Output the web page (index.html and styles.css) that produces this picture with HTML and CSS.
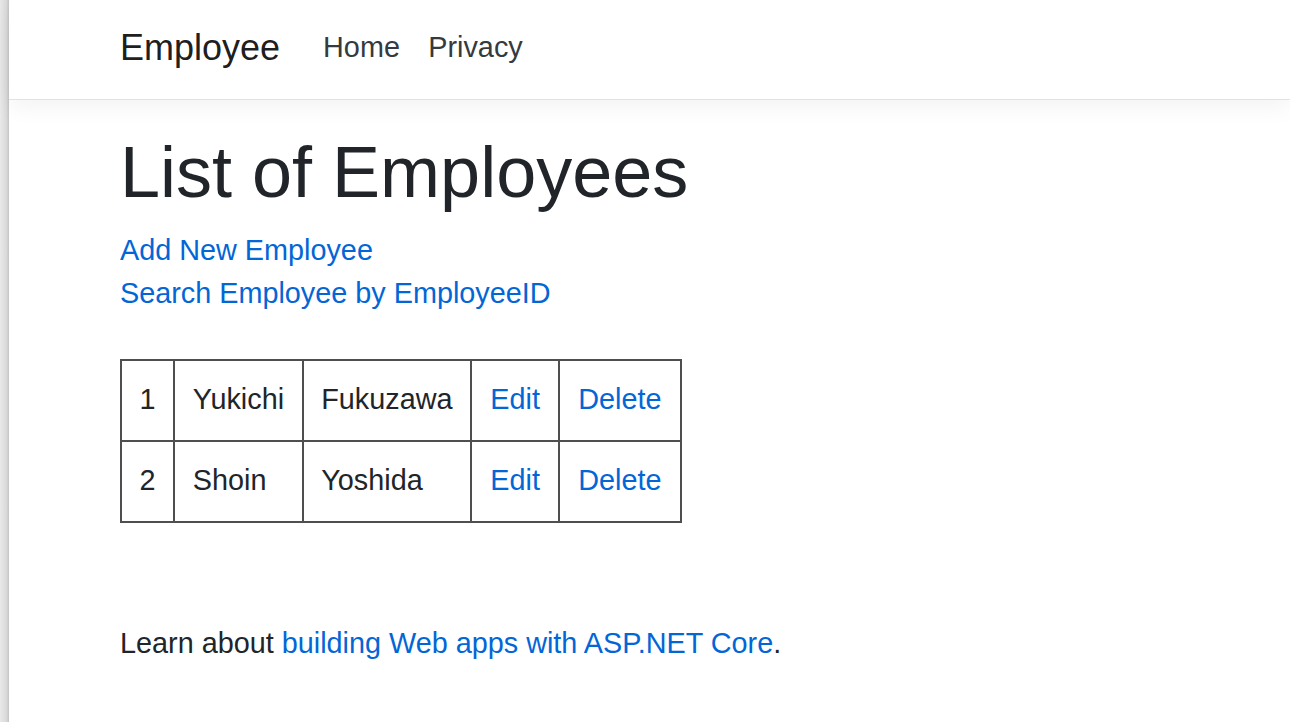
FILE: index.html
```html
<!DOCTYPE html>
<html lang="en">
<head>
<meta charset="utf-8">
<title>List of Employees</title>
<link rel="stylesheet" href="styles.css">
</head>
<body>
<div class="strip"></div>
<div class="page">
  <header class="navbar">
    <a class="brand" href="#">Employee</a>
    <nav class="nav">
      <a class="nav-link" href="#">Home</a>
      <a class="nav-link" href="#">Privacy</a>
    </nav>
  </header>
  <main class="main">
    <h1 class="title">List of Employees</h1>
    <div class="actions">
      <a class="link" href="#">Add New Employee</a>
      <a class="link" href="#">Search Employee by EmployeeID</a>
    </div>
    <table class="emp-table">
      <tbody>
        <tr>
          <td>1</td>
          <td>Yukichi</td>
          <td>Fukuzawa</td>
          <td class="act"><a class="link" href="#">Edit</a></td>
          <td class="act"><a class="link" href="#">Delete</a></td>
        </tr>
        <tr>
          <td>2</td>
          <td>Shoin</td>
          <td>Yoshida</td>
          <td class="act"><a class="link" href="#">Edit</a></td>
          <td class="act"><a class="link" href="#">Delete</a></td>
        </tr>
      </tbody>
    </table>
    <p class="learn">Learn about <a class="link" href="#">building Web apps with ASP.NET Core</a>.</p>
  </main>
</div>
</body>
</html>
```

FILE: styles.css
```css
html, body {
  margin: 0;
  padding: 0;
  height: 100%;
}
body {
  display: flex;
  font-family: "Liberation Sans", Arial, sans-serif;
  font-size: 28.8px;
  line-height: 1.5;
  color: #212529;
  background: #fff;
  overflow: hidden;
}
.strip {
  flex: 0 0 9px;
  background: linear-gradient(to right, #e9e9e9, #dadada 70%, #c4c4c4);
}
.page {
  flex: 1;
  min-width: 0;
}
.navbar {
  box-sizing: border-box;
  height: 100px;
  display: flex;
  align-items: center;
  padding: 0 0 4px 111px;
  background: #fff;
  border-bottom: 1px solid #e2e2e2;
  box-shadow: 0 7px 22px rgba(0, 0, 0, 0.05);
  position: relative;
}
.brand {
  font-size: 36px;
  line-height: 1.5;
  padding: 5.6px 0;
  margin-right: 28.8px;
  color: rgba(0, 0, 0, 0.9);
  text-decoration: none;
}
.nav {
  display: flex;
}
.nav-link {
  padding: 14.4px 14.2px;
  color: #343a40;
  text-decoration: none;
}
.main {
  padding: 28.8px 0 0 111px;
}
.title {
  margin: 0 0 13.4px;
  font-size: 72px;
  line-height: 1.2;
  font-weight: 500;
}
.actions {
  display: flex;
  flex-direction: column;
  align-items: flex-start;
}
.link {
  color: #0366d6;
  text-decoration: none;
}
.emp-table {
  margin-top: 44px;
  border-collapse: collapse;
  border: 2px solid #4f4f4f;
}
.emp-table td {
  border: 2px solid #4f4f4f;
  padding: 17px 17.6px 18.8px;
  white-space: nowrap;
}
.emp-table td.act {
  padding-left: 18.2px;
  padding-right: 18.2px;
}
.learn {
  margin: 99px 0 0;
}
```
